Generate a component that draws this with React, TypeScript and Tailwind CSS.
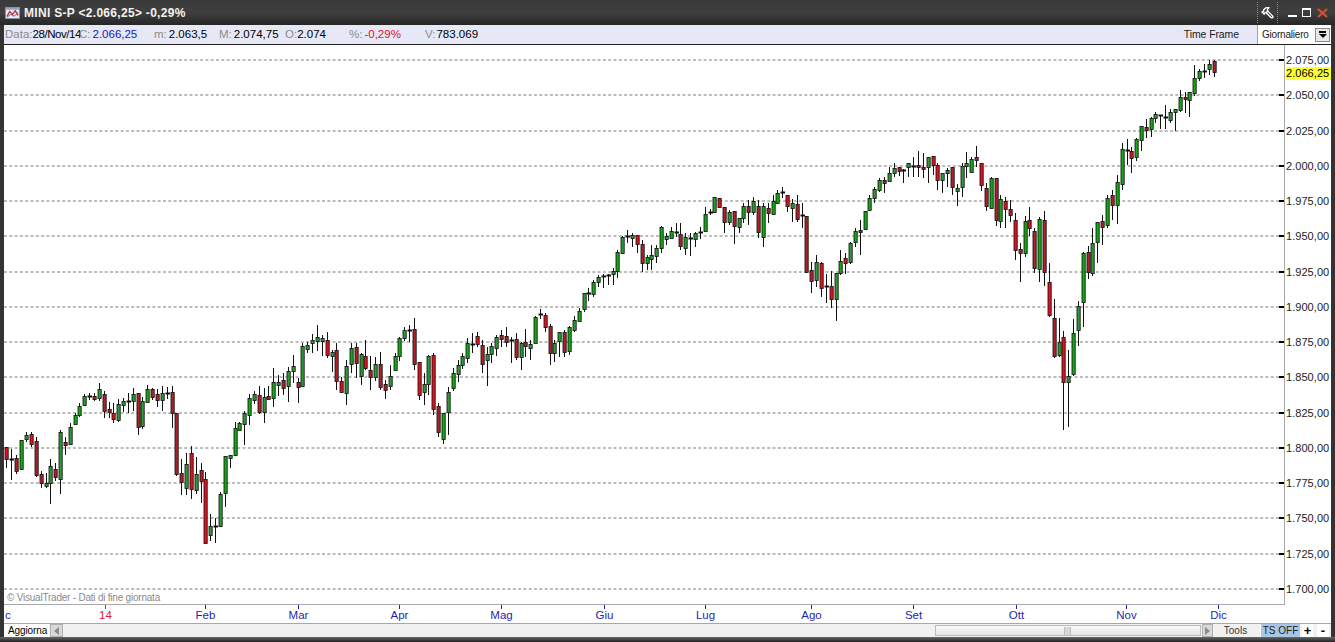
import { Hammer } from "lucide-react";

const FONT = "font-['Liberation_Sans',Arial,sans-serif]";

// x, wick top, wick bottom, body top, body bottom, colour (page pixels)
type Candle = [number, number, number, number, number, string];
const CANDLES: Candle[] = [
  [6,447,468,447,459,"r"],[11,449,480,459,460,"k"],[16,455,474,458,471,"d"],[21,440,470,440,469,"g"],[26,432,442,435,439,"h"],
  [31,432,447,434,444,"r"],[36,437,477,441,475,"d"],[41,471,488,474,483,"d"],[46,473,488,483,486,"h"],[50,459,504,466,483,"h"],
  [55,463,481,469,477,"d"],[60,430,494,432,479,"h"],[65,437,455,442,445,"d"],[70,423,445,427,444,"h"],[75,413,425,415,424,"g"],
  [79,403,417,406,415,"g"],[84,394,406,396,405,"h"],[89,393,400,396,397,"k"],[94,393,401,396,399,"d"],[99,383,401,389,398,"h"],
  [104,391,418,394,411,"d"],[109,402,418,409,412,"d"],[113,403,423,413,419,"r"],[118,399,422,404,420,"h"],[123,398,412,401,405,"h"],
  [128,393,413,401,402,"k"],[133,388,411,394,401,"g"],[138,393,435,393,427,"d"],[142,397,429,401,426,"h"],[147,385,403,389,402,"g"],
  [152,388,400,389,397,"d"],[157,389,407,394,400,"d"],[162,386,411,393,400,"h"],[167,387,399,393,394,"k"],[172,386,428,392,413,"d"],
  [176,413,476,413,474,"d"],[181,459,495,473,482,"d"],[186,453,495,464,488,"h"],[191,446,499,453,489,"r"],[196,457,494,474,490,"h"],
  [201,463,503,470,481,"d"],[205,472,543,479,543,"r"],[210,514,541,526,535,"h"],[215,518,543,526,527,"k"],[220,492,527,494,526,"h"],
  [225,456,507,456,493,"g"],[230,455,468,455,458,"h"],[235,422,456,428,455,"g"],[239,422,430,423,430,"g"],[244,411,445,413,424,"h"],
  [249,394,425,398,415,"g"],[254,391,404,394,400,"h"],[259,386,414,395,412,"d"],[264,388,423,397,412,"h"],[268,386,399,396,399,"d"],
  [273,368,407,382,398,"g"],[278,375,396,382,385,"h"],[283,373,395,380,388,"d"],[288,367,402,371,386,"h"],[293,355,383,366,371,"h"],
  [298,378,403,382,387,"d"],[302,343,387,346,386,"h"],[307,342,353,345,349,"h"],[312,334,353,340,343,"h"],[317,325,351,337,341,"h"],
  [322,335,356,338,341,"h"],[327,332,358,340,355,"r"],[332,350,372,352,356,"h"],[336,343,390,350,381,"d"],[341,377,392,381,392,"r"],
  [346,360,405,366,393,"h"],[351,343,373,348,364,"g"],[356,343,378,347,363,"d"],[361,353,385,354,376,"h"],[365,340,370,356,368,"r"],
  [370,356,390,370,377,"d"],[375,357,381,364,377,"h"],[380,352,390,364,387,"d"],[385,380,399,384,390,"d"],[390,365,390,376,386,"h"],
  [395,353,371,356,370,"g"],[399,337,361,338,356,"g"],[404,327,341,330,338,"h"],[409,325,342,330,331,"k"],[414,318,370,329,364,"d"],
  [419,362,400,362,395,"r"],[424,373,405,384,392,"h"],[428,355,395,356,384,"h"],[433,353,415,355,409,"r"],[438,403,437,406,432,"d"],
  [443,413,444,413,439,"g"],[448,387,435,392,412,"h"],[453,368,391,373,388,"g"],[458,360,382,365,374,"h"],[462,353,369,356,365,"h"],
  [467,338,363,343,358,"g"],[472,333,353,344,345,"k"],[477,332,347,336,344,"r"],[482,340,373,345,364,"d"],[487,347,386,354,360,"h"],
  [491,343,363,346,354,"h"],[496,335,356,337,348,"h"],[501,330,347,335,339,"d"],[506,327,347,336,342,"d"],[511,337,363,340,341,"k"],
  [516,333,360,339,357,"d"],[521,342,370,343,357,"h"],[525,329,357,342,346,"d"],[530,340,360,344,348,"h"],[535,316,343,317,343,"g"],
  [540,309,319,314,316,"k"],[545,313,332,315,327,"r"],[550,324,365,326,353,"d"],[554,340,362,343,353,"h"],[559,332,357,332,341,"g"],
  [564,330,357,332,352,"d"],[569,326,355,327,351,"g"],[574,316,332,320,330,"h"],[579,308,322,311,321,"g"],[584,293,312,293,309,"h"],
  [588,288,301,293,295,"k"],[593,280,297,282,294,"g"],[598,275,287,277,282,"h"],[603,274,288,276,277,"k"],[608,274,285,275,276,"k"],
  [613,268,285,271,274,"h"],[617,250,278,252,271,"g"],[622,236,254,237,253,"h"],[627,230,243,236,238,"k"],[632,233,247,235,238,"h"],
  [637,235,253,235,244,"r"],[642,240,272,244,263,"d"],[647,255,270,257,263,"g"],[651,245,270,255,259,"h"],[656,245,263,248,256,"h"],
  [661,226,253,227,248,"g"],[666,233,245,236,239,"h"],[671,227,238,231,238,"g"],[676,223,237,232,233,"k"],[680,223,250,234,246,"d"],
  [685,233,255,237,248,"h"],[690,233,256,238,239,"k"],[695,232,247,233,239,"h"],[700,227,239,232,233,"k"],[705,207,232,214,231,"g"],
  [710,209,215,212,214,"k"],[714,197,213,197,212,"g"],[719,198,208,198,207,"r"],[724,207,233,207,222,"d"],[729,210,225,212,222,"h"],
  [734,211,244,211,226,"d"],[739,218,233,218,227,"h"],[743,203,223,206,218,"g"],[748,200,225,206,212,"d"],[753,197,215,201,212,"h"],
  [758,200,238,206,232,"d"],[763,203,247,206,237,"g"],[768,203,223,208,213,"d"],[773,195,215,201,214,"g"],[777,190,203,193,203,"g"],
  [782,187,198,192,193,"k"],[787,195,212,195,206,"r"],[792,199,222,203,208,"h"],[797,195,222,204,219,"d"],[802,203,228,215,216,"k"],
  [806,216,272,216,272,"d"],[811,262,293,270,281,"d"],[816,255,287,262,280,"h"],[821,262,297,263,288,"r"],[826,274,303,286,287,"k"],
  [831,271,308,286,299,"r"],[836,273,321,273,299,"h"],[840,250,275,261,273,"g"],[845,253,274,258,263,"r"],[850,242,264,243,262,"h"],
  [855,228,247,231,242,"g"],[860,220,255,230,232,"d"],[865,211,230,211,229,"g"],[869,195,211,198,210,"g"],[874,187,203,189,198,"h"],
  [879,178,192,180,190,"g"],[884,177,193,180,183,"d"],[889,167,182,173,181,"h"],[894,163,177,168,173,"h"],[899,167,176,167,171,"d"],
  [903,169,183,170,171,"k"],[908,163,177,163,167,"h"],[913,157,177,166,167,"k"],[918,151,177,165,167,"d"],[923,153,178,167,169,"d"],
  [928,157,183,157,167,"h"],[933,156,175,156,165,"r"],[937,163,190,165,180,"r"],[942,173,193,173,180,"h"],[947,168,187,170,173,"h"],
  [952,167,195,167,187,"d"],[957,184,206,188,191,"h"],[962,163,197,166,187,"h"],[966,152,178,163,166,"h"],[971,157,173,159,172,"g"],
  [976,146,167,157,160,"d"],[981,163,191,163,185,"r"],[986,183,211,188,206,"d"],[991,177,208,178,208,"g"],[996,178,226,178,220,"d"],
  [1000,195,228,199,221,"g"],[1005,197,228,201,209,"r"],[1010,200,222,209,215,"d"],[1015,213,260,220,250,"r"],[1020,243,282,249,253,"d"],
  [1025,216,257,221,253,"g"],[1029,207,236,220,228,"r"],[1034,228,273,231,268,"d"],[1039,217,282,219,269,"g"],[1044,211,286,220,272,"d"],
  [1049,263,317,282,315,"r"],[1054,299,358,318,356,"d"],[1059,318,357,342,355,"h"],[1063,331,430,337,382,"r"],[1068,350,427,376,382,"h"],
  [1073,319,376,333,374,"g"],[1078,301,346,306,330,"h"],[1083,252,327,253,302,"g"],[1088,246,279,252,272,"d"],[1092,228,276,243,273,"h"],
  [1097,222,263,222,242,"g"],[1102,215,245,221,227,"d"],[1107,195,228,198,225,"g"],[1112,190,220,195,205,"d"],[1117,175,224,182,205,"g"],
  [1122,143,190,149,184,"g"],[1127,139,165,150,151,"k"],[1131,147,173,151,158,"r"],[1136,138,161,139,157,"g"],[1141,126,151,126,140,"g"],
  [1146,119,138,127,130,"d"],[1151,117,137,118,129,"g"],[1155,112,123,114,118,"h"],[1160,115,129,115,116,"k"],[1165,105,129,117,118,"k"],
  [1170,109,123,112,120,"h"],[1175,109,131,109,112,"h"],[1180,90,112,97,110,"g"],[1185,92,113,97,99,"d"],[1189,92,117,92,100,"g"],
  [1194,65,96,78,93,"g"],[1199,69,81,71,78,"g"],[1204,64,78,71,72,"k"],[1209,60,75,64,69,"h"],[1214,60,77,61,72,"d"],
];

const FILLS: Record<string, string> = {
  g: "#14a814",
  h: "#2c9a34",
  r: "#e0101e",
  d: "#b0202a",
  k: "#000000",
};

const PRICES = [
  "2.075,00", "2.050,00", "2.025,00", "2.000,00", "1.975,00", "1.950,00", "1.925,00", "1.900,00",
  "1.875,00", "1.850,00", "1.825,00", "1.800,00", "1.775,00", "1.750,00", "1.725,00", "1.700,00",
];
const GRID = PRICES.map((_, i) => Math.round(60 + i * 35.25));

const MONTHS = [
  { label: "14", x: 105, red: true },
  { label: "Feb", x: 205 },
  { label: "Mar", x: 298 },
  { label: "Apr", x: 399 },
  { label: "Mag", x: 501 },
  { label: "Giu", x: 604 },
  { label: "Lug", x: 705 },
  { label: "Ago", x: 811 },
  { label: "Set", x: 913 },
  { label: "Ott", x: 1016 },
  { label: "Nov", x: 1126 },
  { label: "Dic", x: 1218 },
];

const Chart = () => (
  <svg viewBox="4 45 1280 560" className="block w-[1280px] h-[560px]">
    {GRID.map((y) => (
      <g key={y}>
        <line x1={4} x2={1280} y1={y} y2={y} stroke="#bcbcbc" strokeWidth={1.8} strokeDasharray="3 2.3" />
        <line x1={1279} x2={1284} y1={y} y2={y} stroke="#000" strokeWidth={2} />
      </g>
    ))}
    {CANDLES.map(([x, wt, wb, bt, bb, c]) => (
      <g key={x}>
        <line x1={x + 0.5} x2={x + 0.5} y1={wt} y2={wb} stroke="#111" />
        {c === "k" ? (
          <line x1={x - 1.5} x2={x + 3} y1={bt + 0.5} y2={bt + 0.5} stroke="#111" strokeWidth={2} />
        ) : (
          <rect x={x - 1} y={bt + 0.5} width={3.2} height={bb - bt} fill={FILLS[c]} stroke="#151515" strokeWidth={0.85} />
        )}
      </g>
    ))}
  </svg>
);

const WindowIcon = () => (
  <svg width="15" height="12" viewBox="0 0 16 13" className="ml-[5px] mr-[4px] shrink-0">
    <rect x="0.5" y="0.5" width="15" height="12" fill="#e8e8f0" stroke="#8a93a8" />
    <rect x="1" y="1" width="14" height="2" fill="#8fa6cc" />
    <path d="M2 10 L5 5 L8 8 L11 4 L14 9" fill="none" stroke="#d02a2a" strokeWidth="1.4" />
    <path d="M2 11 L6 8 L10 10 L14 6" fill="none" stroke="#3a58b0" />
  </svg>
);

const FIELDS = [
  { label: "C:", value: "2.066,25", w: "w-[75px]", gap: "gap-[2px]", color: "text-[#1a1ab4]" },
  { label: "m:", value: "2.063,5", w: "w-[65px]", gap: "gap-[2px]", color: "text-black" },
  { label: "M:", value: "2.074,75", w: "w-[66px]", gap: "gap-[2px]", color: "text-black" },
  { label: "O:", value: "2.074", w: "w-[64px]", gap: "gap-0", color: "text-black" },
  { label: "%:", value: "-0,29%", w: "w-[76px]", gap: "gap-[2px]", color: "text-[#e0102a]" },
  { label: "V:", value: "783.069", w: "w-[60px]", gap: "gap-[1px]", color: "text-black" },
];

export default function App() {
  return (
    <div className={`${FONT} w-[1335px] h-[642px] overflow-hidden bg-[#333333] flex flex-col text-[11px] leading-none`}>
      {/* title bar */}
      <div className="h-[25px] shrink-0 flex items-center bg-linear-to-b from-[#3a3a3a] via-[#3f3f3f] to-[#262626] text-white">
        <WindowIcon />
        <span className="font-bold text-[12px] tracking-[0.3px] text-[#f2f2f2]">MINI S-P &lt;2.066,25&gt; -0,29%</span>
        <div className="ml-auto flex items-center">
          <div className="w-[21px] h-[21px] flex items-center justify-center border-x border-dotted border-[#8a8a8a]">
            <Hammer size={13} strokeWidth={2.6} className="text-white -scale-x-100" />
          </div>
          <div className="w-[9px] h-[2px] bg-white ml-[10px] mt-[7px]" />
          <div className="w-[9px] h-[9px] border border-white border-t-2 ml-[5px]" />
          <svg width="11" height="10" viewBox="0 0 11 10" className="ml-[6px] mr-[7px]">
            <path d="M1 1 L10 9 M10 1 L1 9" stroke="#d8502e" strokeWidth="2.2" />
          </svg>
        </div>
      </div>

      <div className="mx-[4px] flex-1 flex flex-col bg-white min-h-0">
        {/* quote strip */}
        <div className="h-[20px] shrink-0 flex items-center pl-[1px] bg-[#e7e8f5] border-b border-[#222222] text-[11.5px] whitespace-nowrap">
          <div className="w-[74px] flex">
            <span className="text-[#8b8b8b]">Data:</span>
            <span className="text-black tracking-[-0.45px]">28/Nov/14</span>
          </div>
          {FIELDS.map((f) => (
            <div key={f.label} className={`${f.w} flex ${f.gap}`}>
              <span className="text-[#8b8b8b]">{f.label}</span>
              <span className={f.color}>{f.value}</span>
            </div>
          ))}
          <span className="ml-auto text-[10.5px] tracking-[-0.1px] text-[#202020] mr-[18px]">Time Frame</span>
          <div className="w-[74px] h-[19px] bg-white border-l border-[#a0a0a0] flex items-center pl-[4px] text-[#202020] text-[10px] tracking-[-0.2px]">
            Giornaliero
            <div className="ml-auto mr-[1px] w-[15px] h-[14px] bg-[#e8e8e8] border border-[#8c8c8c] flex flex-col items-center justify-center gap-[1px]">
              <div className="w-[7px] h-[2px] bg-black" />
              <div className="w-0 h-0 border-x-[4px] border-x-transparent border-t-[4px] border-t-black" />
            </div>
          </div>
        </div>

        {/* chart and price scale */}
        <div className="h-[560px] shrink-0 flex">
          <div className="relative w-[1281px] border-r border-b border-[#a9a9a9]">
            <Chart />
            <span className="absolute left-[3px] bottom-[1px] text-[10px] tracking-[-0.22px] text-[#8a8a8a]">© VisualTrader - Dati di fine giornata</span>
          </div>
          <div className="relative flex-1 flex flex-col -mt-[2px] text-[11px] tracking-[0.05px] text-[#1c1c1c] pl-[1px]">
            {PRICES.map((p) => (
              <div key={p} className="h-[35.25px] shrink-0 flex items-center whitespace-nowrap">{p}</div>
            ))}
            <div className="absolute left-[1px] top-[24px] w-[45px] h-[13px] flex items-center bg-[#ffff33] text-black">2.066,25</div>
          </div>
        </div>

        {/* month axis */}
        <div className="h-[18px] shrink-0 flex text-[11.5px] text-[#1f1fb0]">
          <div className="w-[101px] pt-[5px] pl-[1px]">c</div>
          {MONTHS.map((m, i) => (
            <div
              key={m.label}
              className={`shrink-0 ${m.red ? "text-[#d82038]" : ""}`}
              style={{ width: i === MONTHS.length - 1 ? 40 : MONTHS[i + 1].x - m.x }}
            >
              <div className="w-px flex flex-col items-center">
                <div className={`w-px h-[4px] shrink-0 ${m.red ? "bg-[#d82038]" : "bg-[#1f1fb0]"}`} />
                <span className="mt-[1px]">{m.label}</span>
              </div>
            </div>
          ))}
        </div>

        {/* status bar */}
        <div className="h-[14px] shrink-0 flex items-stretch bg-[#f1f1f1] border-t border-[#a8a8a8] text-[11px] whitespace-nowrap">
          <div className="w-[45px] bg-white flex items-center pl-[4px] text-black text-[10px] tracking-[-0.1px]">Aggiorna</div>
          <div className="w-[13px] ml-[1px] bg-[#d8d8d8] border border-[#b0b0b0] flex items-center justify-center">
            <div className="w-0 h-0 border-y-[4px] border-y-transparent border-r-[5px] border-r-[#8a8a8a]" />
          </div>
          <div className="ml-[872px] w-[266px] my-[1px] bg-linear-to-b from-[#fafafa] to-[#e4e4e4] border border-[#bcbcbc] flex items-center pl-[128px]">
            <div className="w-[7px] h-[8px] border-x border-[#c0c0c0] bg-[#d8d8d8]" />
          </div>
          <div className="w-[11px] ml-[1px] bg-[#d8d8d8] border border-[#b0b0b0] flex items-center justify-center">
            <div className="w-0 h-0 border-y-[4px] border-y-transparent border-l-[5px] border-l-[#8a8a8a]" />
          </div>
          <div className="w-[43px] pl-[2px] flex items-center justify-center text-[#333333] text-[10px]">Tools</div>
          <div className="w-[40px] ml-[4px] bg-[#a9c6e6] flex items-center justify-center text-[#222222] text-[10px] border-l border-white">TS OFF</div>
          <div className="w-[11px] ml-[2px] bg-white flex items-center justify-center font-bold text-[13px] text-black">+</div>
          <div className="w-[12px] ml-[4px] bg-white flex items-center justify-center font-bold text-[13px] text-black">-</div>
        </div>
      </div>
      <div className="h-[5px] shrink-0 bg-linear-to-b from-[#6a6a6a] to-[#222222]" />
    </div>
  );
}
